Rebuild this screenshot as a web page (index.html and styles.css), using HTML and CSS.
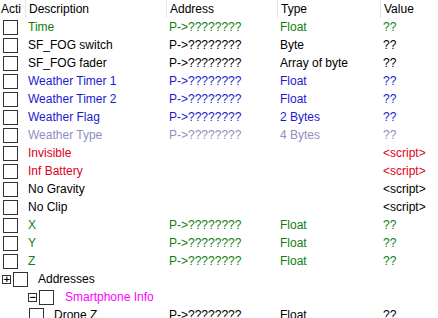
FILE: index.html
```html
<!DOCTYPE html>
<html>
<head>
<meta charset="utf-8">
<link rel="stylesheet" href="styles.css">
</head>
<body>
<div class="list">
  <div class="row head">
    <div class="hcell c-act">Acti</div>
    <div class="hcell c-desc">Description</div>
    <div class="hcell c-addr">Address</div>
    <div class="hcell c-type">Type</div>
    <div class="hcell c-val">Value</div>
  </div>

  <div class="row green"><div class="lead"><span class="cb"></span><span class="txt">Time</span></div><div class="cell">P-&gt;????????</div><div class="cell">Float</div><div class="cell">??</div></div>
  <div class="row"><div class="lead"><span class="cb"></span><span class="txt">SF_FOG switch</span></div><div class="cell">P-&gt;????????</div><div class="cell">Byte</div><div class="cell">??</div></div>
  <div class="row"><div class="lead"><span class="cb"></span><span class="txt">SF_FOG fader</span></div><div class="cell">P-&gt;????????</div><div class="cell">Array of byte</div><div class="cell">??</div></div>
  <div class="row blue"><div class="lead"><span class="cb"></span><span class="txt">Weather Timer 1</span></div><div class="cell">P-&gt;????????</div><div class="cell">Float</div><div class="cell">??</div></div>
  <div class="row blue"><div class="lead"><span class="cb"></span><span class="txt">Weather Timer 2</span></div><div class="cell">P-&gt;????????</div><div class="cell">Float</div><div class="cell">??</div></div>
  <div class="row blue"><div class="lead"><span class="cb"></span><span class="txt">Weather Flag</span></div><div class="cell">P-&gt;????????</div><div class="cell">2 Bytes</div><div class="cell">??</div></div>
  <div class="row grey"><div class="lead"><span class="cb"></span><span class="txt">Weather Type</span></div><div class="cell">P-&gt;????????</div><div class="cell">4 Bytes</div><div class="cell">??</div></div>
  <div class="row red"><div class="lead"><span class="cb"></span><span class="txt">Invisible</span></div><div class="cell"></div><div class="cell"></div><div class="cell">&lt;script&gt;</div></div>
  <div class="row red"><div class="lead"><span class="cb"></span><span class="txt">Inf Battery</span></div><div class="cell"></div><div class="cell"></div><div class="cell">&lt;script&gt;</div></div>
  <div class="row"><div class="lead"><span class="cb"></span><span class="txt">No Gravity</span></div><div class="cell"></div><div class="cell"></div><div class="cell">&lt;script&gt;</div></div>
  <div class="row"><div class="lead"><span class="cb"></span><span class="txt">No Clip</span></div><div class="cell"></div><div class="cell"></div><div class="cell">&lt;script&gt;</div></div>
  <div class="row green"><div class="lead"><span class="cb"></span><span class="txt">X</span></div><div class="cell">P-&gt;????????</div><div class="cell">Float</div><div class="cell">??</div></div>
  <div class="row green"><div class="lead"><span class="cb"></span><span class="txt">Y</span></div><div class="cell">P-&gt;????????</div><div class="cell">Float</div><div class="cell">??</div></div>
  <div class="row green"><div class="lead"><span class="cb"></span><span class="txt">Z</span></div><div class="cell">P-&gt;????????</div><div class="cell">Float</div><div class="cell">??</div></div>
  <div class="row"><div class="lead lvl0"><span class="exp">+</span><span class="cb"></span><span class="txt">Addresses</span></div><div class="cell"></div><div class="cell"></div><div class="cell"></div></div>
  <div class="row magenta"><div class="lead lvl1"><span class="exp">−</span><span class="cb"></span><span class="txt">Smartphone Info</span></div><div class="cell"></div><div class="cell"></div><div class="cell"></div></div>
  <div class="row"><div class="lead lvl2"><span class="cb"></span><span class="txt">Drone Z</span></div><div class="cell">P-&gt;????????</div><div class="cell">Float</div><div class="cell">??</div></div>
</div>
</body>
</html>
```

FILE: styles.css
```css
html, body {
  margin: 0;
  padding: 0;
  background: #ffffff;
}
body {
  font-family: "Liberation Sans", Arial, sans-serif;
  font-size: 12px;
  color: #000000;
  overflow: hidden;
}
.list {
  width: 438px;
}
.row {
  display: grid;
  grid-template-columns: 166px 111px 103px 1fr;
  height: 18px;
  align-items: center;
  white-space: nowrap;
}
.head {
  grid-template-columns: 25px 141px 111px 103px 1fr;
  align-items: stretch;
}
.hcell {
  padding-left: 3px;
  line-height: 18px;
  border-left: 1px solid #e5e5e5;
  overflow: hidden;
}
.hcell.c-act {
  border-left: none;
  padding-left: 1px;
}
.cell {
  padding-left: 3px;
  overflow: hidden;
}
.lead {
  display: flex;
  align-items: center;
  padding-left: 3px;
  overflow: hidden;
}
.cb {
  width: 13px;
  height: 13px;
  border: 1px solid #333333;
  background: #ffffff;
  flex: none;
}
.txt {
  margin-left: 10px;
}
.exp {
  width: 7px;
  height: 7px;
  border: 1px solid #333333;
  font-size: 9px;
  line-height: 7px;
  text-align: center;
  flex: none;
  margin-right: 2px;
  color: #000000;
  font-family: "DejaVu Sans", sans-serif;
  font-weight: bold;
}
.lead.lvl0 { padding-left: 2px; }
.lead.lvl0 .txt { margin-left: 10px; }
.lead.lvl1 { padding-left: 28px; }
.lead.lvl1 .txt { margin-left: 11px; }
.lead.lvl2 { padding-left: 29px; }

.green { color: #108010; }
.blue { color: #1a1ad0; }
.grey { color: #9090c0; }
.red { color: #e00020; }
.magenta .txt { color: #ff00ff; }
```
